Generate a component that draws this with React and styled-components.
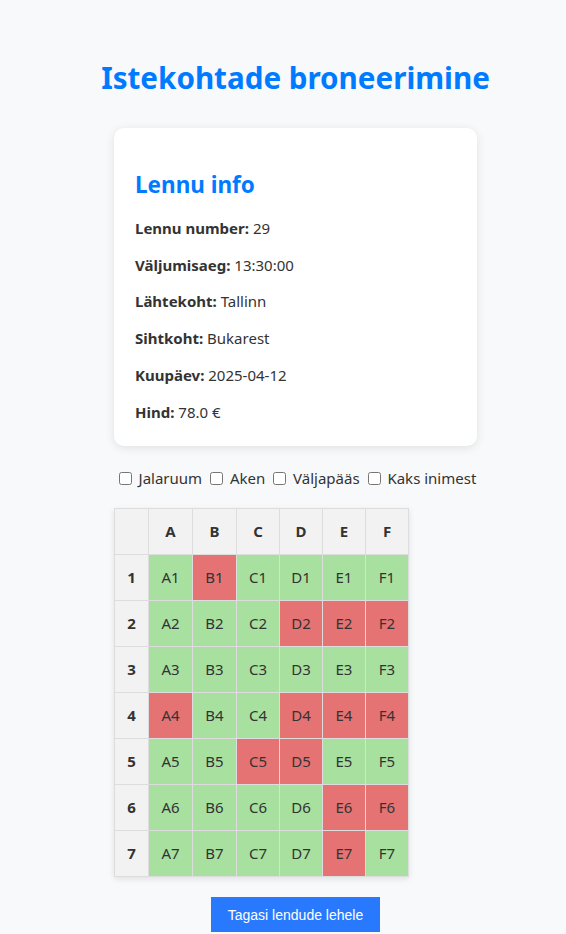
import React from 'react'
import styled, { createGlobalStyle } from 'styled-components'

const FONT = `'Segoe UI', 'Noto Sans', sans-serif`

const GlobalStyle = createGlobalStyle`
  body {
    margin: 0;
    background: #f8f9fa;
    font-family: ${FONT};
    color: #333;
  }
`

const Page = styled.main`
  padding: 57px 0 20px 25px;
  display: flex;
  flex-direction: column;
  align-items: center;
`

const Title = styled.h1`
  margin: 0 0 29px;
  font-size: 29.6px;
  line-height: 42px;
  font-weight: 700;
  color: #007bff;
`

const Column = styled.div`
  width: 363px;
  display: flex;
  flex-direction: column;
`

const Card = styled.section`
  background: #fff;
  border-radius: 10px;
  box-shadow: 0 2px 10px rgba(0, 0, 0, 0.1);
  padding: 20px 20px 8px 21px;

  h2 {
    margin: 21px 0 17px;
    font-size: 22.5px;
    line-height: 32px;
    color: #007bff;
  }

  p {
    margin: 16px 0;
    font-size: 15px;
    line-height: 20.7px;
  }
`

const Filters = styled.div`
  margin: 22px -10px 19px -10px;
  text-align: center;
  font-size: 15px;
  line-height: 21px;
  white-space: nowrap;

  input {
    margin: 0 3px 0 4px;
    width: 13px;
    height: 13px;
    vertical-align: -1px;
  }
`

const SeatTable = styled.table`
  border-collapse: collapse;
  table-layout: fixed;
  width: 294px;
  box-shadow: 0 2px 6px rgba(0, 0, 0, 0.1);
  font-size: 15px;
  line-height: 21px;
`

const Col = styled.col`
  width: ${({ $w }) => $w}px;
`

const Cell = styled.td`
  border: 1px solid #ddd;
  padding: 12px 0;
  text-align: center;
  background: ${({ $taken }) => ($taken ? '#e57373' : '#a8e0a0')};
  color: #333;
`

const Head = styled.th`
  border: 1px solid #ddd;
  padding: 12px 0;
  text-align: center;
  background: #f2f2f2;
  font-weight: 700;
  color: #333;
`

const BackButton = styled.button`
  margin-top: 20px;
  width: 169px;
  height: 35px;
  border: none;
  background: #2979ff;
  color: #fff;
  font-family: 'Liberation Sans', Arial, sans-serif;
  font-size: 14px;
  cursor: pointer;
`

const info = [
  ['Lennu number:', '29'],
  ['Väljumisaeg:', '13:30:00'],
  ['Lähtekoht:', 'Tallinn'],
  ['Sihtkoht:', 'Bukarest'],
  ['Kuupäev:', '2025-04-12'],
  ['Hind:', '78.0 €'],
]

const letters = ['A', 'B', 'C', 'D', 'E', 'F']
const colWidths = [34, 44, 44, 43, 43, 43, 43]
const taken = ['B1', 'D2', 'E2', 'F2', 'A4', 'D4', 'E4', 'F4', 'C5', 'D5', 'E6', 'F6', 'E7']
const filters = ['Jalaruum', 'Aken', 'Väljapääs', 'Kaks inimest']

export default function App() {
  return (
    <>
      <GlobalStyle />
      <Page>
        <Title>Istekohtade broneerimine</Title>
        <Column>
          <Card>
            <h2>Lennu info</h2>
            {info.map(([label, value]) => (
              <p key={label}>
                <strong>{label}</strong> {value}
              </p>
            ))}
          </Card>
          <Filters>
            {filters.map((f) => (
              <React.Fragment key={f}>
                <label>
                  <input type="checkbox" /> {f}
                </label>{' '}
              </React.Fragment>
            ))}
          </Filters>
          <SeatTable>
            <colgroup>
              {colWidths.map((w, i) => (
                <Col key={i} $w={w} />
              ))}
            </colgroup>
            <thead>
              <tr>
                <Head />
                {letters.map((l) => (
                  <Head key={l}>{l}</Head>
                ))}
              </tr>
            </thead>
            <tbody>
              {[1, 2, 3, 4, 5, 6, 7].map((row) => (
                <tr key={row}>
                  <Head>{row}</Head>
                  {letters.map((l) => (
                    <Cell key={l} $taken={taken.includes(l + row)}>
                      {l + row}
                    </Cell>
                  ))}
                </tr>
              ))}
            </tbody>
          </SeatTable>
        </Column>
        <BackButton>Tagasi lendude lehele</BackButton>
      </Page>
    </>
  )
}
